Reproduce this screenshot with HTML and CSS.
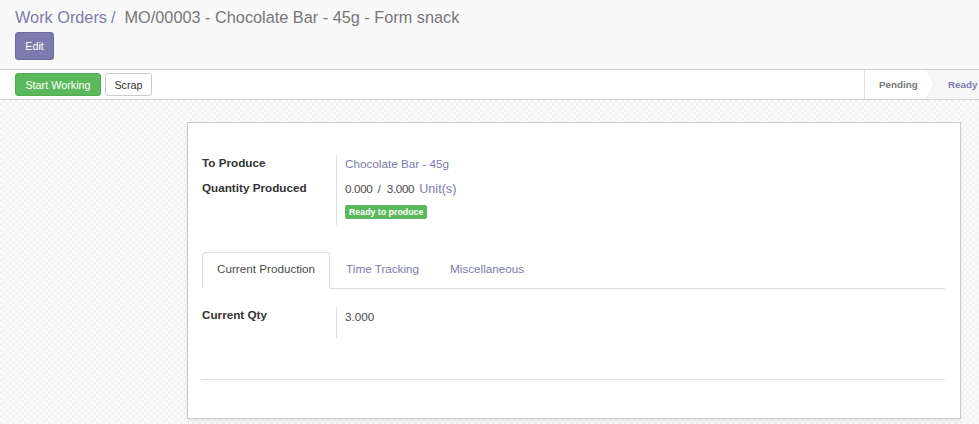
FILE: index.html
```html
<!DOCTYPE html>
<html>
<head>
<meta charset="utf-8">
<link rel="stylesheet" href="styles.css">
</head>
<body>
<div class="control-panel">
  <div class="breadcrumb"><a class="bc-link">Work Orders</a><span class="bc-sep">/</span><span class="bc-active">MO/00003 - Chocolate Bar - 45g - Form snack</span></div>
  <div class="cp-buttons"><button class="btn btn-primary">Edit</button></div>
</div>
<div class="statusbar">
  <div class="sb-buttons">
    <button class="btn btn-success">Start Working</button>
    <button class="btn btn-default">Scrap</button>
  </div>
  <div class="sb-status">
    <div class="st st-pending">Pending</div>
    <div class="st st-ready">Ready</div>
  </div>
</div>
<div class="content">
  <div class="sheet">
    <div class="group">
      <div class="row row1">
        <div class="label">To Produce</div>
        <div class="value"><a class="link">Chocolate Bar - 45g</a></div>
      </div>
      <div class="row row2">
        <div class="label">Quantity Produced</div>
        <div class="value">
          <div class="qty"><span class="num">0.000</span><span class="slash">/</span><span class="num">3.000</span><span class="uom">Unit(s)</span></div>
          <span class="badge">Ready to produce</span>
        </div>
      </div>
    </div>
    <div class="tabs">
      <div class="tab active">Current Production</div>
      <div class="tab">Time Tracking</div>
      <div class="tab">Miscellaneous</div>
    </div>
    <div class="group group2">
      <div class="row">
        <div class="label">Current Qty</div>
        <div class="value">3.000</div>
      </div>
    </div>
    <div class="sep"></div>
  </div>
</div>
</body>
</html>
```
FILE: styles.css
```css
html, body { margin: 0; padding: 0; }
body {
  font-family: "Liberation Sans", Arial, sans-serif;
  font-size: 11.7px;
  color: #4c4c4c;
  width: 979px;
  height: 424px;
  overflow: hidden;
  background: #fff;
}
.control-panel {
  background: #f9f9f9;
  border-bottom: 1px solid #cfcfcf;
  padding: 6px 15px 9px 15px;
  height: 54px;
}
.breadcrumb {
  font-size: 16.3px;
  line-height: 22px;
  color: #777;
}
.bc-link { color: #7c7bad; }
.bc-sep { margin: 0 9px 0 4px; color: #7c7bad; }
.cp-buttons { margin-top: 4px; }
.btn {
  font-family: "Liberation Sans", Arial, sans-serif;
  font-size: 10.8px;
  border-radius: 3px;
  border: 1px solid transparent;
  padding: 0;
  cursor: pointer;
}
.btn-primary {
  background: #7c7bad;
  border-color: #6e6d9f;
  color: #fff;
  height: 28px;
  width: 39px;
}
.statusbar {
  height: 29px;
  border-bottom: 1px solid #cfcfcf;
  display: flex;
  justify-content: space-between;
  background: #fff;
}
.sb-buttons {
  display: flex;
  gap: 4px;
  padding: 3px 0 0 15px;
  align-items: flex-start;
}
.btn-success {
  background: #5cb85c;
  border-color: #4cae4c;
  color: #fff;
  height: 23px;
  width: 86px;
}
.btn-default {
  background: #fff;
  border-color: #ccc;
  color: #333;
  height: 23px;
  width: 47px;
}
.sb-status {
  display: flex;
  border-left: 1px solid #e2e2e2;
  font-size: 9.8px;
  font-weight: bold;
  width: 114px;
}
.st {
  display: flex;
  align-items: center;
  height: 29px;
  position: relative;
  box-sizing: border-box;
}
.st-pending {
  color: #777;
  width: 61px;
  padding-left: 14px;
  background: #fff;
  z-index: 1;
}
.st-pending::after {
  content: "";
  position: absolute;
  right: -8px;
  top: 0;
  border-top: 14.5px solid transparent;
  border-bottom: 14.5px solid transparent;
  border-left: 8px solid #fff;
}
.st-pending::before {
  content: "";
  position: absolute;
  right: -9px;
  top: 0;
  border-top: 14.5px solid transparent;
  border-bottom: 14.5px solid transparent;
  border-left: 9px solid #ececec;
}
.st-ready {
  color: #7c7bad;
  background: #f6f6f6;
  padding-left: 22px;
  flex: 1;
  overflow: hidden;
  white-space: nowrap;
}
.content {
  height: 324px;
  padding: 22px 0 0 187px;
  box-sizing: border-box;
  background-color: #f8f8f8;
  background-image: repeating-conic-gradient(#f2f2f2 0 25%, #fbfbfb 0 50%);
  background-size: 6px 6px;
}
.sheet {
  width: 743px;
  background: #fff;
  border: 1px solid #c9c9d3;
  box-shadow: 0 3px 4px rgba(0,0,0,0.06);
  padding: 32px 15px 38px 14px;
}
.group { display: flex; flex-direction: column; }
.row { display: flex; }
.label {
  width: 134px;
  font-weight: bold;
  color: #333;
  line-height: 15px;
}
.value {
  border-left: 1px solid #ddd;
  padding-left: 8px;
  color: #4c4c4c;
  line-height: 18px;
}
.row1 .value { padding-bottom: 7px; }
.value .link { color: #7c7bad; }
.qty { display: flex; }
.num { letter-spacing: -0.35px; }
.slash { margin: 0 6px 0 5px; }
.uom { color: #7c7bad; margin-left: 5px; font-size: 12.6px; }
.badge {
  display: inline-block;
  background: #5cb85c;
  color: #fff;
  font-size: 8.8px;
  font-weight: bold;
  padding: 2px 4px;
  border-radius: 2px;
  margin-top: 7px;
  margin-bottom: 6px;
  line-height: 10px;
  vertical-align: top;
}
.tabs {
  display: flex;
  margin-top: 27px;
  border-bottom: 1px solid #ddd;
  height: 36px;
}
.tab {
  padding: 0 14px 3px;
  line-height: 32px;
  box-sizing: content-box;
  color: #7c7bad;
  border: 1px solid transparent;
  border-radius: 3px 3px 0 0;
  margin-right: 1px;
  height: 32px;
}
.tab.active {
  color: #4c4c4c;
  border-color: #ddd;
  border-bottom-color: #fff;
  background: #fff;
}
.group2 { margin-top: 18px; }
.group2 .value { padding-top: 1px; padding-bottom: 12px; }
.sep {
  margin-top: 41px;
  border-top: 1px solid #ddd;
}
```
